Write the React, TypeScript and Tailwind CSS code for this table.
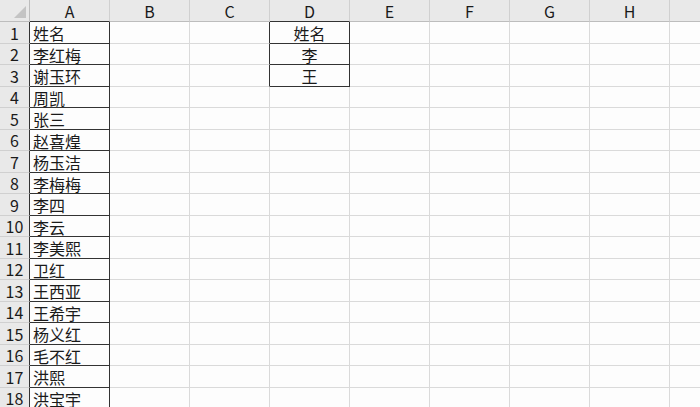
import React from 'react';

const columns = ['A', 'B', 'C', 'D', 'E', 'F', 'G', 'H'];

const names = [
  '姓名', '李红梅', '谢玉环', '周凯', '张三', '赵喜煌', '杨玉洁', '李梅梅', '李四',
  '李云', '李美熙', '卫红', '王西亚', '王希宇', '杨义红', '毛不红', '洪熙', '洪宝宇',
];

const lookup = ['姓名', '李', '王'];

const font = { fontFamily: '"Noto Sans CJK SC", "Liberation Sans", sans-serif' };

export default function App() {
  return (
    <div className="w-[700px] h-[407px] overflow-hidden bg-[#fdfdfd] text-[#1a1a1a]" style={font}>
      {/* column headers */}
      <div className="flex h-[22px] bg-[#e9e9e9]">
        <div className="relative w-[30px] shrink-0 border-r border-b border-[#bdbdbd]">
          <div className="absolute right-[3px] bottom-[3px] w-0 h-0 border-l-[12px] border-l-transparent border-b-[12px] border-b-[#c4c4c4]" />
        </div>
        {columns.map((c) => (
          <div
            key={c}
            className={`w-[80px] shrink-0 flex items-center justify-center text-[16px] leading-[18px] border-r border-r-[#d0d0d0] border-b ${
              c === 'A' || c === 'D' ? 'border-b-[#333]' : 'border-b-[#bdbdbd]'
            }`}
          >
            {c}
          </div>
        ))}
        <div className="flex-1 border-b border-[#bdbdbd]" />
      </div>

      {names.map((name, i) => {
        const row = i + 1;
        const hasLookup = i < lookup.length;
        return (
          <div key={row} className={`flex ${i % 2 === 0 ? 'h-[22px]' : 'h-[21px]'}`}>
            <div className="w-[30px] shrink-0 bg-[#e9e9e9] flex items-center justify-center text-[16px] leading-[18px] border-r border-r-[#333] border-b border-b-[#d0d0d0]">
              {row}
            </div>
            {columns.map((c) => {
              let cls = 'border-r-[#dadada] border-b-[#dadada]';
              let content: React.ReactNode = null;
              if (c === 'A') {
                cls = 'border-r-[#333] border-b-[#333] justify-start pl-[3px]';
                content = name;
              } else if (c === 'C' && hasLookup) {
                cls = 'border-r-[#333] border-b-[#dadada]';
              } else if (c === 'D' && hasLookup) {
                cls = 'border-r-[#333] border-b-[#333] justify-center';
                content = lookup[i];
              }
              return (
                <div
                  key={c}
                  className={`w-[80px] shrink-0 flex items-center border-r border-b text-[16px] leading-[18px] pt-[1px] ${cls}`}
                >
                  {content}
                </div>
              );
            })}
            <div className="flex-1 border-b border-[#dadada]" />
          </div>
        );
      })}
    </div>
  );
}
